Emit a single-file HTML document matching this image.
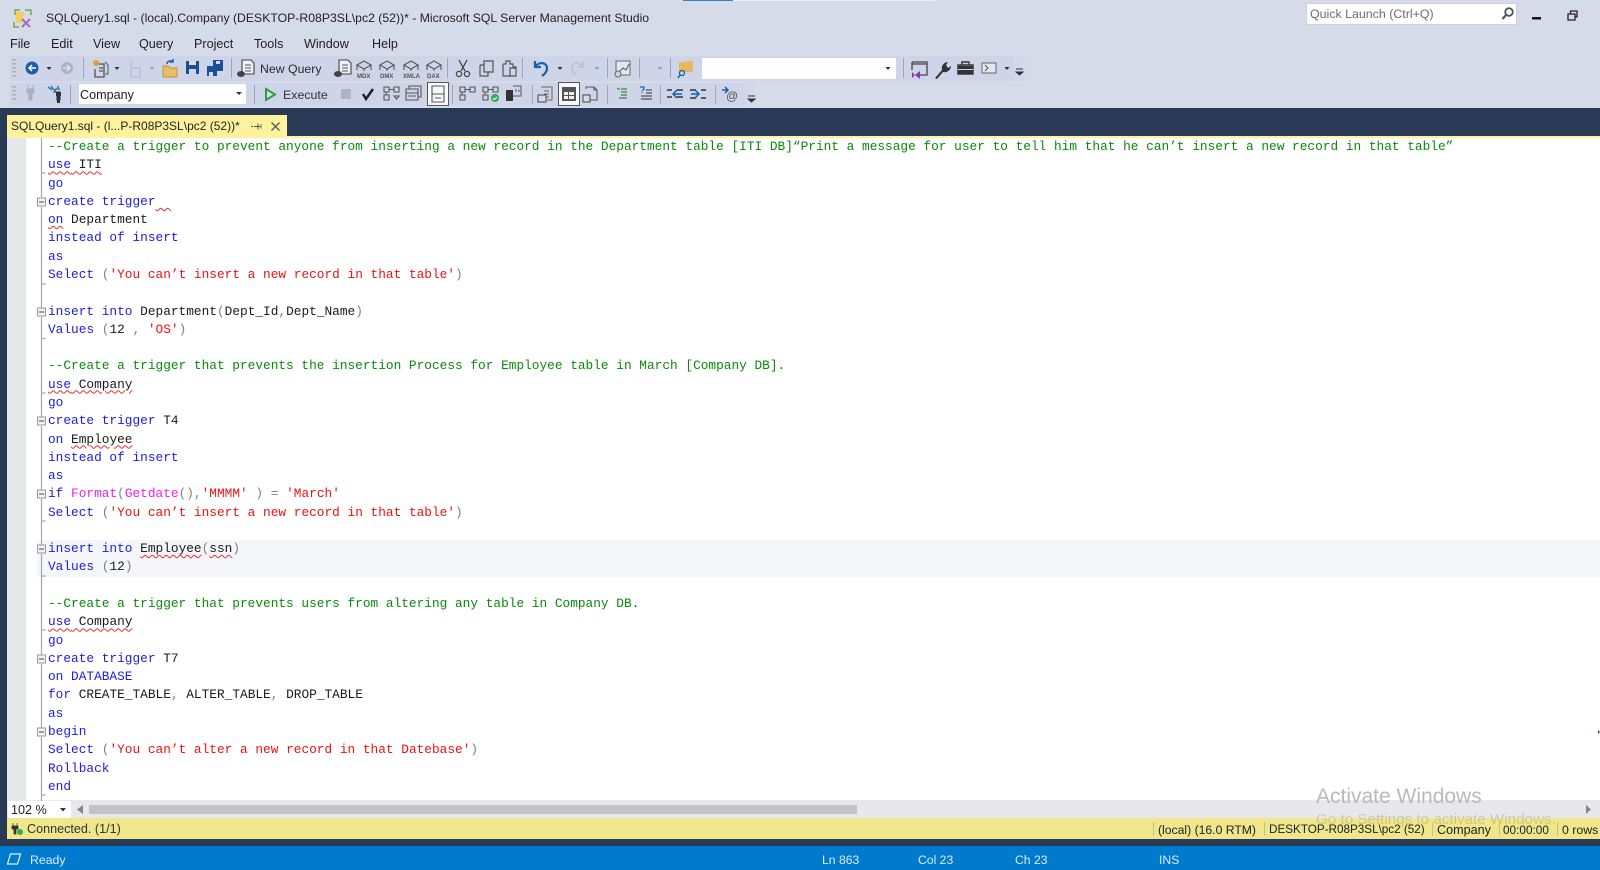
<!DOCTYPE html>
<html><head><meta charset="utf-8"><title>SSMS</title>
<style>
html,body{margin:0;padding:0;width:1600px;height:870px;overflow:hidden;background:#d6dbe9;font-family:"Liberation Sans",sans-serif}
.a{position:absolute;white-space:pre}
.u{font-size:12.6px;color:#1e1e1e;line-height:16px}
#code{position:absolute;left:48px;top:138px;margin:0;font:12.8px/18.28px "Liberation Mono",monospace;color:#1a1a1a;white-space:pre;filter:blur(.3px)}
.k{color:#1c1ce0}.c{color:#0a8a0a}.s{color:#f01010}.f{color:#f020f0}.g{color:#808080}
.w{text-decoration:underline wavy #e03030 1px;text-underline-offset:2px}
</style></head><body>
<div class="a" style="left:683px;top:0;width:50px;height:1px;background:#3a7fc4"></div>
<div class="a" style="left:733px;top:0;width:202px;height:1px;background:#eef0f6"></div>

<!-- toolbars -->
<div class="a" style="left:10px;top:56px;width:1004px;height:25px;background:#ced5e9"></div>
<div class="a" style="left:10px;top:83px;width:735px;height:23px;background:#ced5e9"></div>
<div class="a" style="left:1014px;top:56px;width:11px;height:25px;background:#d2d8ea"></div>
<div class="a" style="left:745px;top:83px;width:10px;height:23px;background:#d2d8ea"></div>
<div class="a" style="left:702px;top:58px;width:194px;height:21px;background:#fff"></div>
<div class="a" style="left:79px;top:84px;width:167px;height:20px;background:#fff"></div>
<div class="a" style="left:427px;top:82px;width:22px;height:24px;background:#f8f9fc;border:1px solid #555;box-sizing:border-box"></div>
<div class="a" style="left:558px;top:82px;width:22px;height:24px;background:#f8f9fc;border:1px solid #555;box-sizing:border-box"></div>
<div class="a" style="left:1306px;top:3px;width:211px;height:22px;background:#fff;border:1px solid #ccd0dc;box-sizing:border-box"></div>

<!-- dark band + tab -->
<div class="a" style="left:0;top:108px;width:1600px;height:738px;background:#2a3a56"></div>
<div class="a" style="left:7px;top:115px;width:280px;height:22px;background:#fff29d"></div>

<!-- editor -->
<div class="a" style="left:7px;top:136px;width:1593px;height:664px;background:#fff"></div>
<div class="a" style="left:7px;top:136px;width:1593px;height:2px;background:#fff29d"></div>
<div class="a" style="left:7px;top:138px;width:19px;height:662px;background:#e6e7e8"></div>
<div class="a" style="left:37px;top:540px;width:1563px;height:37px;background:#f5f6f9"></div>

<pre id="code"><span class="c">--Create a trigger to prevent anyone from inserting a new record in the Department table [ITI DB]“Print a message for user to tell him that he can’t insert a new record in that table”</span>
<span class="w"><span class="k">use</span> ITI</span>
<span class="k">go</span>
<span class="k">create trigger</span><span class="w">  </span>
<span class="k w">on</span> Department
<span class="k">instead of insert</span>
<span class="k">as</span>
<span class="k">Select</span> <span class="g">(</span><span class="s">'You can’t insert a new record in that table'</span><span class="g">)</span>

<span class="k">insert into</span> Department<span class="g">(</span>Dept_Id<span class="g">,</span>Dept_Name<span class="g">)</span>
<span class="k">Values</span> <span class="g">(</span>12 <span class="g">,</span> <span class="s">'OS'</span><span class="g">)</span>

<span class="c">--Create a trigger that prevents the insertion Process for Employee table in March [Company DB].</span>
<span class="w"><span class="k">use</span> Company</span>
<span class="k">go</span>
<span class="k">create trigger</span> T4
<span class="k">on</span> <span class="w">Employee</span>
<span class="k">instead of insert</span>
<span class="k">as</span>
<span class="k">if</span> <span class="f">Format</span><span class="g">(</span><span class="f">Getdate</span><span class="g">(),</span><span class="s">'MMMM'</span> <span class="g">) =</span> <span class="s">'March'</span>
<span class="k">Select</span> <span class="g">(</span><span class="s">'You can’t insert a new record in that table'</span><span class="g">)</span>

<span class="k">insert into</span> <span class="w">Employee</span><span class="g">(</span><span class="w">ssn</span><span class="g">)</span>
<span class="k">Values</span> <span class="g">(</span>12<span class="g">)</span>

<span class="c">--Create a trigger that prevents users from altering any table in Company DB.</span>
<span class="w"><span class="k">use</span> Company</span>
<span class="k">go</span>
<span class="k">create trigger</span> T7
<span class="k">on DATABASE</span>
<span class="k">for</span> CREATE_TABLE<span class="g">,</span> ALTER_TABLE<span class="g">,</span> DROP_TABLE
<span class="k">as</span>
<span class="k">begin</span>
<span class="k">Select</span> <span class="g">(</span><span class="s">'You can’t alter a new record in that Datebase'</span><span class="g">)</span>
<span class="k">Rollback</span>
<span class="k">end</span></pre>

<!-- scrollbar -->
<div class="a" style="left:7px;top:800px;width:1593px;height:18px;background:#e8e8ec"></div>
<div class="a" style="left:8px;top:801px;width:63px;height:17px;background:#fff"></div>
<div class="a" style="left:89px;top:805px;width:768px;height:9px;background:#c2c3c9"></div>
<!-- yellow status -->
<div class="a" style="left:7px;top:818px;width:1593px;height:21px;background:#f0e68c"></div>
<!-- blue status -->
<div class="a" style="left:0;top:846px;width:1600px;height:24px;background:#007acc"></div>

<!-- title, menu -->
<div class="a u" style="left:46px;top:10px;font-size:12.24px;color:#222">SQLQuery1.sql - (local).Company (DESKTOP-R08P3SL\pc2 (52))* - Microsoft SQL Server Management Studio</div>
<div class="a u" style="left:10px;top:36px">File</div>
<div class="a u" style="left:51px;top:36px">Edit</div>
<div class="a u" style="left:93px;top:36px">View</div>
<div class="a u" style="left:139px;top:36px">Query</div>
<div class="a u" style="left:194px;top:36px">Project</div>
<div class="a u" style="left:254px;top:36px">Tools</div>
<div class="a u" style="left:304px;top:36px">Window</div>
<div class="a u" style="left:372px;top:36px">Help</div>
<div class="a u" style="left:1310px;top:6px;color:#6d6d6d;font-size:12.4px">Quick Launch (Ctrl+Q)</div>
<div class="a u" style="left:260px;top:61px;color:#2a2a2a;font-size:12.3px">New Query</div>
<div class="a u" style="left:80px;top:87px;color:#1e1e1e">Company</div>
<div class="a u" style="left:283px;top:87px;color:#333;font-size:12.4px">Execute</div>
<div class="a u" style="left:11px;top:118px;color:#222;font-size:12px">SQLQuery1.sql - (l...P-R08P3SL\pc2 (52))*</div>
<div class="a u" style="left:11px;top:802px;color:#222">102 %</div>
<div class="a u" style="left:27px;top:821px;color:#333">Connected. (1/1)</div>
<div class="a u" style="left:1158px;top:822px;color:#222;font-size:12.2px">(local) (16.0 RTM)</div>
<div class="a u" style="left:1269px;top:822px;color:#222;font-size:11.7px">DESKTOP-R08P3SL\pc2 (52)</div>
<div class="a u" style="left:1437px;top:822px;color:#222">Company</div>
<div class="a u" style="left:1503px;top:822px;color:#222;font-size:11.8px">00:00:00</div>
<div class="a u" style="left:1562px;top:822px;color:#222;font-size:12.3px">0 rows</div>
<div class="a u" style="left:30px;top:852px;color:#dcebf7;font-size:12.3px">Ready</div>
<div class="a u" style="left:822px;top:852px;color:#dcebf7;font-size:12.2px">Ln 863</div>
<div class="a u" style="left:918px;top:852px;color:#dcebf7;font-size:12.2px">Col 23</div>
<div class="a u" style="left:1015px;top:852px;color:#dcebf7;font-size:12.2px">Ch 23</div>
<div class="a u" style="left:1159px;top:852px;color:#dcebf7;font-size:12.2px">INS</div>
<div class="a" style="left:1316px;top:784px;font-size:21px;line-height:25px;color:#b9b9b9">Activate Windows</div>
<div class="a" style="left:1316px;top:811px;font-size:15.2px;line-height:18px;color:rgba(120,120,120,.28)">Go to Settings to activate Windows.</div>

<!-- icons -->
<svg class="a" style="left:0;top:0" width="1600" height="870" viewBox="0 0 1600 870" fill="none">
<!-- app logo -->
<path d="M15 15v-5h5M25 10h6v5M14 22v5h5" stroke="#5aa63c" stroke-width="1.3"/>
<path d="M16 12h8l-2 11h-6z" fill="#f6cf55"/>
<path d="M22 19l8 8M30 19l-8 8" stroke="#a070c0" stroke-width="2"/>
<!-- grips -->
<g fill="#aab0c0">
<path d="M12 59h4v1.500h-4zM12 63h4v1.500h-4zM12 67h4v1.500h-4zM12 71h4v1.500h-4zM12 75h4v1.500h-4z"/>
<path d="M12 86h4v1.500h-4zM12 90h4v1.500h-4zM12 94h4v1.500h-4zM12 98h4v1.500h-4z"/>
</g>
<!-- separators -->
<g stroke="#9ea6b8" stroke-width="1">
<path d="M83.500 58v20M231.500 58v20M447.500 58v20M522.500 58v20M607.500 58v20M639.500 58v20M670.500 58v20M903.500 58v20"/>
<path d="M70.500 85v19M254.500 85v19M452.500 85v19M532.500 85v19M607.500 85v19M660.500 85v19M715.500 85v19"/>
</g>
<!-- dropdown arrows -->
<g fill="#333">
<path d="M46.500 67h5l-2.500 3zM114.500 67h5l-2.500 3zM557.500 67h5l-2.500 3zM885.500 67h5l-2.500 3zM1004.500 67h5l-2.500 3zM236 92h6l-3 3z"/>
<path d="M60 808h6l-3 3.500z"/>
</g>
<g fill="#9a9ea8"><path d="M149.500 67h5l-2.500 3zM594.500 67h5l-2.500 3zM657.500 67h5l-2.500 3z"/></g>
<!-- overflow -->
<path d="M1016 69h7M1016 72h7l-3.500 3z" stroke="#333" fill="#333"/>
<path d="M748 96h7M748 99h7l-3.500 3z" stroke="#333" fill="#333"/>
<!-- back / forward -->
<circle cx="32" cy="68" r="6.500" fill="#1b5fa8"/><path d="M36 68h-7M32 65l-3 3 3 3" stroke="#fff" stroke-width="1.500"/>
<circle cx="67" cy="68" r="6" fill="#aeb3bf"/><path d="M63 68h7M67 65l3 3-3 3" stroke="#e4e6ee" stroke-width="1.300"/>
<!-- new project -->
<g transform="translate(1 0)"><path d="M95 64h8v13h-9v-8M98 68h4M98 71h4" stroke="#555" stroke-width="1.300"/><circle cx="95" cy="63" r="3" fill="#e3a030"/><path d="M104 62l3 3v9h-3" stroke="#555"/></g>
<g transform="translate(1 0)"><path d="M130 68h9v9h-9zM130 63v4" stroke="#b6bcc8" stroke-width="1.300"/><circle cx="130" cy="62" r="2" fill="#c6ccd8"/></g>
<!-- open -->
<g transform="translate(1 0)"><path d="M162 66h5l2 2h7v9h-14z" fill="#e9bc66" stroke="#c4933a"/><path d="M166 64c0-3 4-4 6-2M172 59v3h-3" stroke="#1b5fa8" stroke-width="1.500"/></g>
<!-- save -->
<g transform="translate(3 0)"><path d="M183 61h13v13h-13z" fill="#1b4f93"/><path d="M186 61h7v4h-7z" fill="#d6dbe9"/><path d="M186 69h7v5h-7z" fill="#ccd5ec"/></g>
<g transform="translate(1 0)"><path d="M206 66h10v10h-10z" fill="#1b4f93"/><path d="M212 60h10v11h-6v-5h-4z" fill="#1b4f93"/><path d="M215 61h4v3h-4zM208 72h4v4h-4z" fill="#d6dbe9"/></g>
<!-- new query -->
<g transform="translate(2 0)"><path d="M240 60h9l3 3v11h-12z" fill="#f0f1f5" stroke="#444" stroke-width="1.100"/><path d="M243 65h6M243 68h6M243 71h6" stroke="#555"/><ellipse cx="239" cy="74" rx="4" ry="3" fill="#444"/></g>
<g transform="translate(4 0)"><path d="M335 60h9l3 3v11h-12z" fill="#f0f1f5" stroke="#444" stroke-width="1.100"/><path d="M338 65h6M338 68h6M338 71h6" stroke="#555"/><ellipse cx="334" cy="74" rx="4" ry="3" fill="#444"/></g>
<!-- cubes -->
<g transform="translate(2 0)">
<g stroke="#555" stroke-width="1.100">
<path d="M355 65l7-4 7 4-7 4zM355 65v5M369 65v5M362 69v2"/>
<path d="M378 65l7-4 7 4-7 4zM378 65v5M392 65v5M385 69v2"/>
<path d="M402 65l7-4 7 4-7 4zM402 65v5M416 65v5M409 69v2"/>
<path d="M425 65l7-4 7 4-7 4zM425 65v5M439 65v5M432 69v2"/>
</g>
<g fill="#555" font-family="Liberation Sans" font-size="6" font-weight="bold">
<text x="355" y="78">MDX</text><text x="378" y="78">DMX</text><text x="401" y="78">XMLA</text><text x="425" y="78">DAX</text>
</g>
</g>
<!-- cut copy paste -->
<g transform="translate(1 0)">
<path d="M458 60l6 11M466 60l-6 11" stroke="#444" stroke-width="1.300"/><circle cx="458" cy="74" r="2.600" stroke="#444" stroke-width="1.300"/><circle cx="466" cy="74" r="2.600" stroke="#444" stroke-width="1.300"/>
<path d="M483 61h9v11h-9zM479 65h4M479 65v11h8v-4" stroke="#555" stroke-width="1.200"/>
<path d="M502 64h3v-3h4v3h3v3h3v9h-7M502 64v12h7V68h6" stroke="#555" stroke-width="1.200"/>
</g>
<!-- undo redo -->
<path d="M535 61v6h6M536 66c4-5 11-3 11 2 0 3-2 6-5 8" stroke="#1b5fa8" stroke-width="2.200"/>
<g transform="translate(-5 0)"><path d="M588 61v6h-6M587 66c-4-5-10-3-10 2 0 3 1 5 4 7" stroke="#bfc4d0" stroke-width="2"/></g>
<!-- activity -->
<path d="M616 61h14v14h-14z" fill="#e4e7f0" stroke="#666"/><path d="M619 72l4-4 3 2 3-6" stroke="#666" stroke-width="1.200"/><circle cx="618" cy="74" r="3" stroke="#666" fill="#ccd5ec"/>
<!-- find -->
<g transform="translate(1 0)"><path d="M678 62h6l2-1h6v11h-14z" fill="#e8b85f"/><circle cx="681" cy="73" r="2.500" stroke="#1b5fa8" stroke-width="1.300"/><path d="M679 75l-2 3" stroke="#1b5fa8" stroke-width="1.500"/></g>
<!-- combo right icons -->
<g transform="translate(4 0)"><path d="M908 62h15v13h-8M908 62v8M908 64h15" stroke="#444" stroke-width="1.300"/><path d="M908 72l3 3 5-4v8l-5-4-3 3z" fill="#8a3aa8"/></g>
<path d="M935 78l7-8c-1-3 1-8 6-8l-2 3 2 3 3-2c0 4-4 7-8 6l-6 7z" fill="#333"/>
<path d="M958 65h15v9h-15zM962 65v-3h7v3" stroke="#333" stroke-width="1.400"/><path d="M958 66h15v8h-15z" fill="#333"/><path d="M958 69.500h15" stroke="#ccd5ec"/>
<path d="M982 63h14v10h-14z" fill="#e4e7f0" stroke="#666"/><path d="M985 65l3 3-3 3" stroke="#555"/>

<!-- row 2 -->
<path d="M28 85v4M33 85v4M27 89h7v4h-2v7h-3v-7h-2z" stroke="#aab0bf" fill="#aab0bf"/>
<path d="M48 87l4 3M51 86l3 4M58 86v2M60 89h-4l-2 3h6v8h-3v-7" stroke="#1b5fa8" stroke-width="1.300"/><path d="M56 92h5v4h-1v7h-3v-7h-1z" fill="#333"/>
<path d="M266 89l9 5.500-9 5.500z" fill="#cfe8cf" stroke="#2f9a48" stroke-width="2"/>
<path d="M341 89h10v10h-10z" fill="#aeb3bf"/>
<path d="M363 94l3 5 7-10" stroke="#222" stroke-width="2.500"/>
<g stroke="#555" stroke-width="1.100">
<path d="M384 87h5v5h-5zM394 87h5v5h-5zM389 89.500h5M386 92v3M384 95h5v5h-5zM394 96l2.500 3 2.500-3z"/>
<path d="M406 89h12v11h-12zM409 89v-3h12v11h-3M406 93h12M408 96h8"/>
<g transform="translate(4 0)"><path d="M428 86h12v16h-12zM428 94h12M431 98h6"/></g>
<path d="M460 87h5v5h-5zM470 87h5v5h-5zM465 89.500h5M462 92v3M460 95h5v5h-5z"/>
<path d="M483 87h5v5h-5zM493 87h5v5h-5zM488 89.500h5M485 92v3M483 95h5v5h-5z"/>
</g>
<circle cx="495" cy="98" r="4" fill="#3aa856"/><path d="M493 98l1.500 1.500 2.500-2.500" stroke="#fff"/>
<path d="M506 90h7v11h-7z" fill="#333"/><path d="M513 86h8v10h-8M516 92v-3M519 92v-2" stroke="#555"/>
<path d="M541 87h11v13h-5M544 91h5M544 94h5M544 97h5" stroke="#666"/><path d="M538 95h8v7h-8z" fill="#d6dbe9" stroke="#444"/>
<g transform="translate(1 0)"><path d="M561 87h14v14h-14z" fill="#555"/><path d="M563 92h4v3h-4zM568 92h5v3h-5zM568 96h5v3h-5zM563 96h4v3h-4z" fill="#f0f0f4"/></g>
<path d="M586 89v-2h8l3 3v10h-7M594 87v3h3" stroke="#555"/><path d="M583 95h7v7h-7z" fill="#d6dbe9" stroke="#444"/>
<path d="M617 88l3 1.500M621 89h6M621 92h6M621 95h6M619 98h8" stroke="#3a8a3a" stroke-width="1.200"/>
<path d="M640 87h4v2l-2 2M642 92v1" stroke="#1b5fa8" stroke-width="1.200"/><path d="M646 90h6M646 93h6M641 96h11M641 99h11" stroke="#555" stroke-width="1.200"/>
<path d="M667 90h5M667 97h5M677 90h6M677 97h6" stroke="#333" stroke-width="1.500"/><path d="M674 94h8M677 90l-4 4 4 4" stroke="#1b5fa8" stroke-width="1.500"/>
<path d="M690 90h6M690 98h6M701 90h5M701 98h5" stroke="#333" stroke-width="1.500"/><path d="M691 94h8M695 90l4 4-4 4" stroke="#1b5fa8" stroke-width="1.500"/>
<path d="M722 90h6M725 87l3 3-3 3" stroke="#1b5fa8" stroke-width="1.500"/>
<text x="726" y="100" font-family="Liberation Sans" font-size="12" fill="#555">@</text>

<!-- quick launch search -->
<circle cx="1509" cy="12" r="3.800" stroke="#555" stroke-width="1.800"/><path d="M1506 15l-3.500 4" stroke="#555" stroke-width="2.200"/>
<!-- window buttons -->
<path d="M1532 17h9v2.500h-9z" fill="#111"/>
<path d="M1568 14h7v6h-7zM1570.500 14v-3h6.500v6h-2" stroke="#222" stroke-width="1.300"/>
<!-- tab pin & close -->
<path d="M254 126.500h6M258 123.500v6M261 124.500v4M253 126.500h-2" stroke="#555"/>
<path d="M271.500 122.500l8 8M279.500 122.500l-8 8" stroke="#555" stroke-width="1.300"/>

<!-- outlining: continuous line with ticks -->
<g stroke="#a8a8a8" stroke-width="1.200">
<path d="M41.500 138v59M41.500 207v101M41.500 317v100M41.500 426v64M41.500 499v46M41.500 554v101M41.500 664v64M41.500 737v64"/>
<path d="M41.500 173h4M41.500 284h4M41.500 338.500h4M41.500 393h4M41.500 521h4M41.500 576h4M41.500 630h4M41.500 795h4"/>
</g>
<g fill="#f3f3f3" stroke="#9a9a9a">
<rect x="37.500" y="198" width="8" height="8"/><rect x="37.500" y="308" width="8" height="8"/><rect x="37.500" y="417" width="8" height="8"/><rect x="37.500" y="490" width="8" height="8"/><rect x="37.500" y="545" width="8" height="8"/><rect x="37.500" y="655" width="8" height="8"/><rect x="37.500" y="728" width="8" height="8"/>
</g>
<path d="M39 202h5M39 312h5M39 421h5M39 494h5M39 549h5M39 659h5M39 732h5" stroke="#444"/>

<!-- scroll arrows -->
<path d="M83 805v9l-6-4.500z" fill="#808594"/><path d="M1586 805v9l5-4.500z" fill="#808594"/>
<path d="M1598 730l2 2-2 2z" fill="#1b4f93"/>

<!-- status separators -->
<path d="M1153.500 822v14M1264.500 822v14M1432.500 822v14M1499.500 822v14M1557.500 822v14" stroke="#c8c08a"/>
<!-- plug -->
<path d="M13 823v3M17 823v3M12 826h6v3h-2v5h-2v-5h-2z" fill="#333" stroke="#333" stroke-width=".7"/>
<circle cx="20" cy="832" r="3" fill="#3aa856"/>
<!-- ready icon -->
<path d="M7.500 864l3-10h10l-3 10z" stroke="#e6f1fa" stroke-width="1.200"/>
</svg>
</body></html>
